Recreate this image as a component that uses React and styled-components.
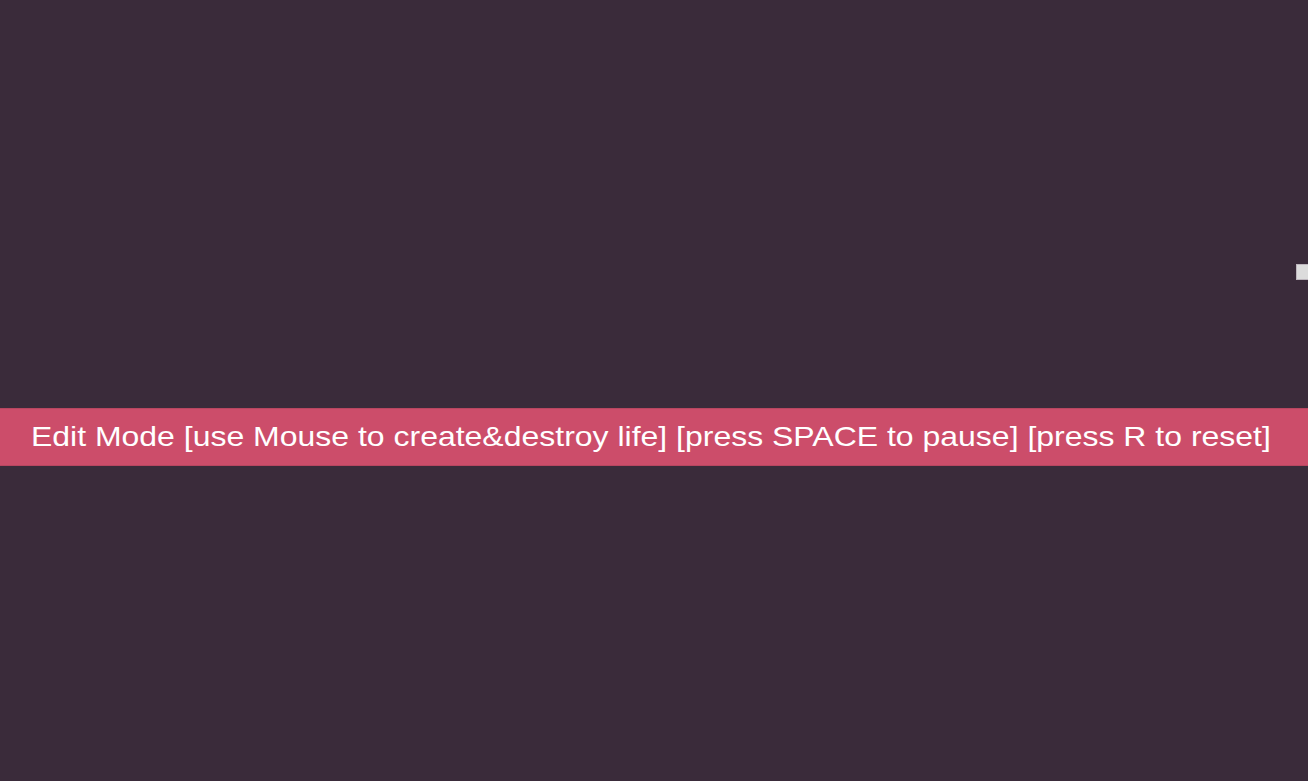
import React from 'react'
import styled, { createGlobalStyle } from 'styled-components'

const Global = createGlobalStyle`
	html, body {
		margin: 0;
		padding: 0;
		background: #3a2b3a;
		overflow: hidden;
	}
`

const Board = styled.div`
	position: relative;
	width: 100vw;
	height: 100vh;
	background: #3a2b3a;
	padding-top: 408px;
	box-sizing: border-box;
	font-family: "Liberation Sans", Arial, sans-serif;
`

const Cell = styled.div`
	position: absolute;
	left: ${p => p.x}px;
	top: ${p => p.y}px;
	width: 16px;
	height: 16px;
	box-sizing: border-box;
	background: #dcdcdc;
	border: 1px solid #bdb6bd;
`

const Banner = styled.div`
	height: 58px;
	display: flex;
	align-items: center;
	justify-content: center;
	background: #cc4d6a;
	border-top: 1px solid #b84660;
	border-bottom: 1px solid #b84660;
	box-sizing: border-box;
	color: #ffffff;
	white-space: nowrap;
	overflow: hidden;
`

const Label = styled.span`
	display: inline-block;
	font-size: 28px;
	transform: scaleX(1.142);
	transform-origin: center;
	margin-left: -6px;
`

export default function App() {
	return (
		<>
			<Global />
			<Board>
				<Cell x={1296} y={264} />
				<Banner>
					<Label>Edit Mode [use Mouse to create&amp;destroy life] [press SPACE to pause] [press R to reset]</Label>
				</Banner>
			</Board>
		</>
	)
}
